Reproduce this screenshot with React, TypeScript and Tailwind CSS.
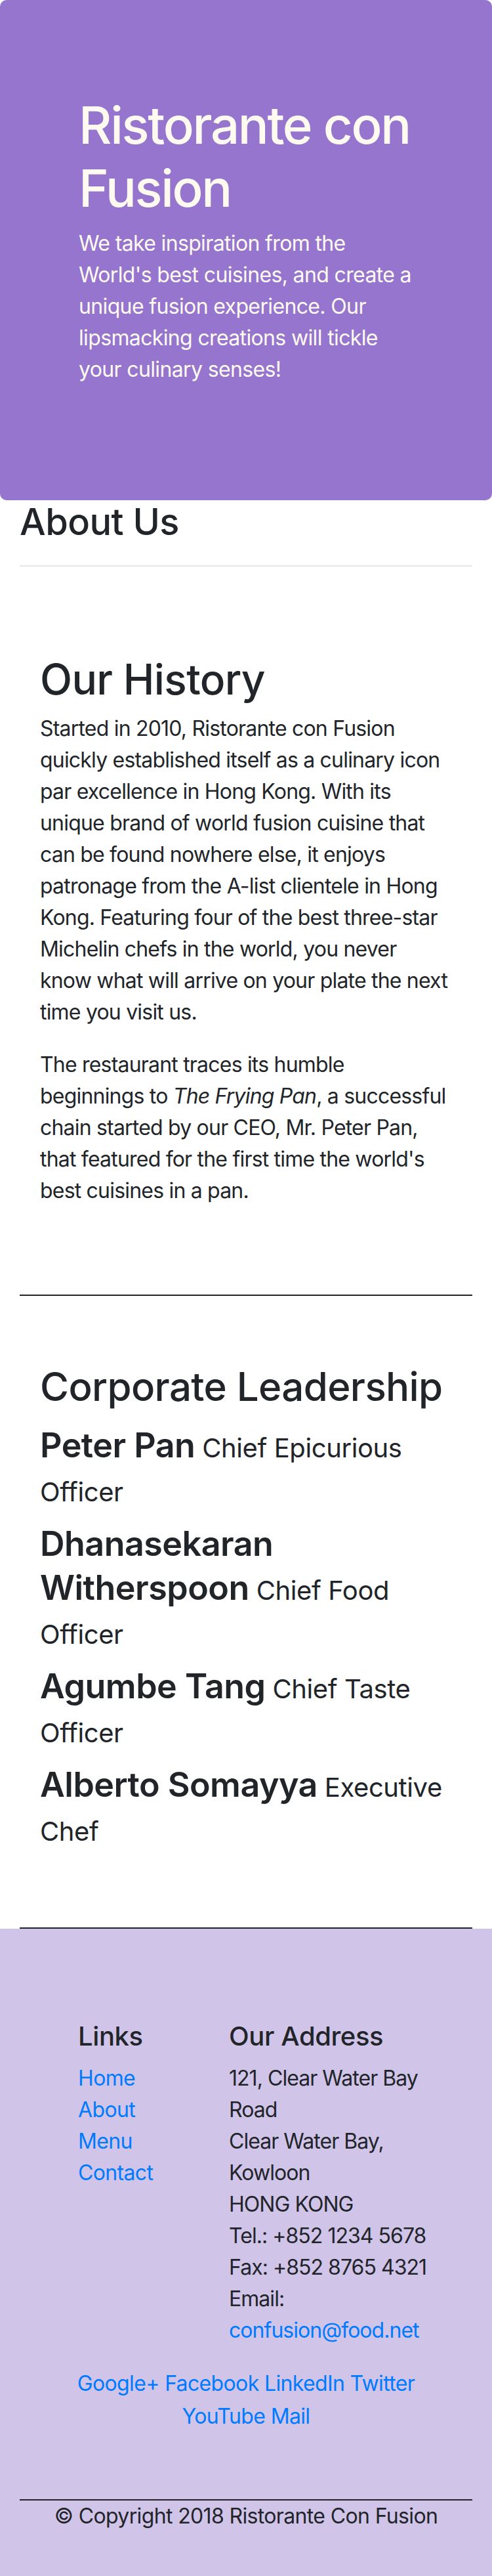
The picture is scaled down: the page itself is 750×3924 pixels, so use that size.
import React from "react";

const leaders = [
  { name: "Peter Pan", title: "Chief Epicurious Officer" },
  { name: "Dhanasekaran Witherspoon", title: "Chief Food Officer" },
  { name: "Agumbe Tang", title: "Chief Taste Officer" },
  { name: "Alberto Somayya", title: "Executive Chef" },
];

export default function App() {
  return (
    <div className="w-[750px] font-['Inter','Noto_Sans',sans-serif] text-[#212529] bg-white">
      <header className="bg-[#9575cd] rounded-[10px] px-[120px] pt-[143px] pb-[143px] text-[#fffaf0]">
        <h1 className="text-[78px] leading-[96px] font-medium mb-[12px] tracking-[-0.03em] -mr-[90px]">
          Ristorante con Fusion
        </h1>
        <p className="text-[32px] leading-[48px] mb-[32px] tracking-[-0.02em]">
          We take inspiration from the World's best cuisines, and create a unique fusion experience. Our
          lipsmacking creations will tickle your culinary senses!
        </p>
      </header>

      <main className="px-[30px]">
        <h3 className="text-[56px] leading-[67px] font-medium tracking-[-0.01em]">About Us</h3>
        <hr className="mt-[32px] border-0 border-t-2 border-[#e6e6e6]" />

        <section className="px-[31px] pt-[133px] pb-[134px]">
          <h2 className="text-[64px] leading-[77px] font-medium mb-[13px] tracking-[-0.01em]">Our History</h2>
          <div className="text-[32px] leading-[48px] tracking-[-0.025em]">
            <p className="mb-[32px]">
              Started in 2010, Ristorante con Fusion quickly established itself as a culinary icon par excellence
              in Hong Kong. With its unique brand of world fusion cuisine that can be found nowhere else, it enjoys
              patronage from the A-list clientele in Hong Kong. Featuring four of the best three-star Michelin chefs
              in the world, you never know what will arrive on your plate the next time you visit us.
            </p>
            <p>
              The restaurant traces its humble beginnings to <em>The Frying Pan</em>, a successful chain started by
              our CEO, Mr. Peter Pan, that featured for the first time the world's best cuisines in a pan.
            </p>
          </div>
        </section>
        <hr className="border-0 border-t-2 border-[#212529]" />

        <section className="px-[31px] pt-[102px] pb-[113px]">
          <h2 className="text-[60px] leading-[72px] font-medium mb-[24px] tracking-[-0.01em]">
            Corporate Leadership
          </h2>
          <div className="flex flex-col gap-[16px]">
            {leaders.map((l) => (
              <div key={l.name} className="text-[40px] leading-[67px] tracking-[-0.01em]">
                <span className="text-[52px] leading-none font-semibold tracking-[-0.01em]">{l.name}</span>{" "}
                {l.title}
              </div>
            ))}
          </div>
        </section>
        <hr className="border-0 border-t-2 border-[#212529]" />
      </main>

      <footer className="bg-[#d1c4e9] pt-[140px] pb-[71px]">
        <div className="flex pl-[119px]">
          <div className="w-[230px] shrink-0">
            <h5 className="text-[40px] leading-[48px] font-medium mb-[16px] tracking-[-0.01em]">Links</h5>
            <ul className="text-[32px] leading-[48px] text-[#007bff] tracking-[-0.02em]">
              <li>Home</li>
              <li>About</li>
              <li>Menu</li>
              <li>Contact</li>
            </ul>
          </div>
          <div className="w-[345px] shrink-0">
            <h5 className="text-[40px] leading-[48px] font-medium mb-[16px] tracking-[-0.01em]">Our Address</h5>
            <address className="not-italic text-[32px] leading-[48px] tracking-[-0.03em] mb-[32px]">
              121, Clear Water Bay Road
              <br />
              Clear Water Bay, Kowloon
              <br />
              HONG KONG
              <br />
              Tel.: +852 1234 5678
              <br />
              Fax: +852 8765 4321
              <br />
              Email: <span className="text-[#007bff]">confusion@food.net</span>
            </address>
          </div>
        </div>
        <div className="mx-auto w-[580px] text-center text-[32px] leading-[50px] text-[#007bff] tracking-[-0.02em]">
          <span>Google+</span> <span>Facebook</span> <span>LinkedIn</span> <span>Twitter</span>{" "}
          <span>YouTube</span> <span>Mail</span>
        </div>
        <div className="px-[30px] mt-[101px]">
          <hr className="border-0 border-t-2 border-[#212529]" />
          <p className="text-center text-[32px] leading-[48px] tracking-[-0.02em]">
            © Copyright 2018 Ristorante Con Fusion
          </p>
        </div>
      </footer>
    </div>
  );
}
